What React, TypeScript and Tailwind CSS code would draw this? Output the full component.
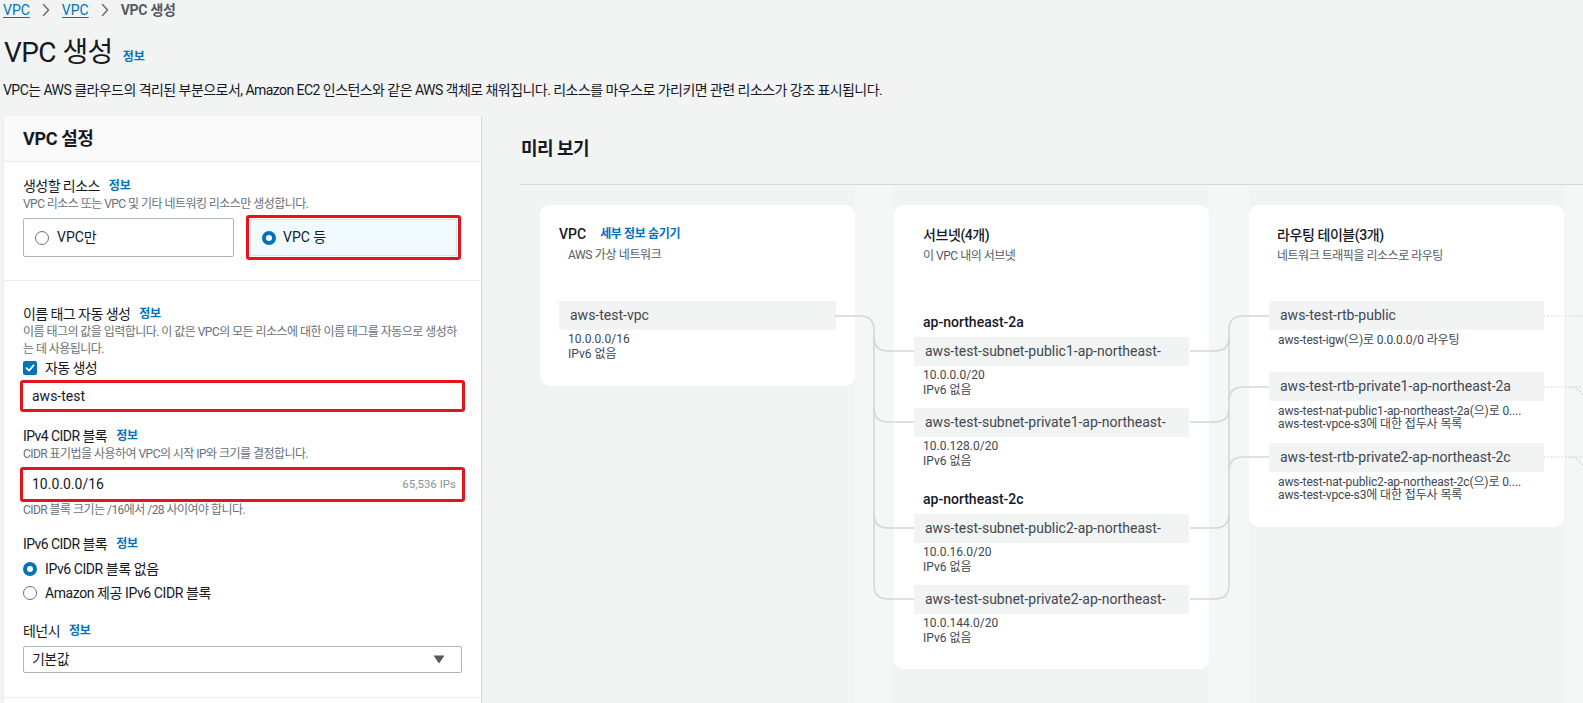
import React from "react";

function Info({ className = "" }: { className?: string }) {
  return <span className={`text-[12px] font-bold text-[#0073bb] tracking-[-0.02em] ${className}`}>정보</span>;
}

function Radio({ checked }: { checked?: boolean }) {
  return checked ? (
    <span className="inline-block w-[14px] h-[14px] rounded-full border-[4px] border-[#0073bb] bg-white shrink-0" />
  ) : (
    <span className="inline-block w-[14px] h-[14px] rounded-full border-[1.5px] border-[#687078] bg-white shrink-0" />
  );
}

function Chevron() {
  return (
    <svg width="8" height="14" viewBox="0 0 8 14" className="shrink-0">
      <path d="M1.5 1.5 L6.5 7 L1.5 12.5" fill="none" stroke="#687078" strokeWidth="1.5" strokeLinecap="round" strokeLinejoin="round" />
    </svg>
  );
}

function Pill({ children }: { children: React.ReactNode }) {
  return (
    <div className="h-[29px] flex items-center bg-[#f2f3f3] pl-[11px] text-[14px] text-[#414750] whitespace-nowrap overflow-hidden">
      {children}
    </div>
  );
}

function Details({ lines, className = "" }: { lines: string[]; className?: string }) {
  return (
    <div className={`pl-[9px] text-[12px] leading-[15px] text-[#414750] ${className}`}>
      {lines.map((l) => (
        <div key={l}>{l}</div>
      ))}
    </div>
  );
}

function RouteDesc({ lines, className = "" }: { lines: string[]; className?: string }) {
  return (
    <div className={`pl-[9px] text-[12px] leading-[13px] text-[#414750] whitespace-nowrap tracking-[-0.01em] ${className}`}>
      {lines.map((l) => (
        <div key={l}>{l}</div>
      ))}
    </div>
  );
}

function Label({ text, className = "" }: { text: string; className?: string }) {
  return (
    <div className={`h-5 flex items-center text-[14px] ${className}`}>
      <span className="tracking-[-0.04em]">{text}</span>
      <Info className="ml-[9px]" />
    </div>
  );
}

function Desc({ children, className = "" }: { children: React.ReactNode; className?: string }) {
  return <div className={`text-[12px] leading-4 text-[#687078] tracking-[-0.045em] whitespace-nowrap ${className}`}>{children}</div>;
}

function LeftPanel() {
  return (
    <div className="ml-[3px] w-[479px] shrink-0 bg-white border-l border-[#eaeded] border-r border-r-[#d5dbdb] flex flex-col">
      <div className="h-[46px] shrink-0 bg-[#fafafa] border-b border-[#eaeded] flex items-center pl-[19px]">
        <span className="text-[18px] font-bold tracking-[-0.02em]">VPC 설정</span>
      </div>

      {/* Section 1 */}
      <div className="px-[19px] pt-[14px] pb-[20px] border-b border-[#eaeded]">
        <Label text="생성할 리소스" />
        <Desc>VPC 리소스 또는 VPC 및 기타 네트워킹 리소스만 생성합니다.</Desc>
        <div className="mt-[3px] grid grid-cols-[211px_215px] gap-x-[12px] items-center h-[45px]">
          <div className="h-[39px] border border-[#aab7b8] rounded-[2px] flex items-center pl-[11px] gap-[8px] text-[14px]">
            <Radio />
            <span>VPC만</span>
          </div>
          <div className="h-[45px] border-[3px] border-[#e3141c] rounded-[3px] p-[1px]">
            <div className="h-full bg-[#f1faff] border border-[#cfe6f4] flex items-center pl-[11px] gap-[7px] text-[14px]">
              <Radio checked />
              <span>VPC 등</span>
            </div>
          </div>
        </div>
      </div>

      {/* Section 2 */}
      <div className="px-[19px] pt-[23px] pb-[24px] border-b border-[#eaeded]">
        <Label text="이름 태그 자동 생성" />
        <div className="text-[12px] leading-[17px] text-[#687078] tracking-[-0.045em] whitespace-nowrap">
          이름 태그의 값을 입력합니다. 이 값은 VPC의 모든 리소스에 대한 이름 태그를 자동으로 생성하
          <br />는 데 사용됩니다.
        </div>
        <div className="h-5 flex items-center gap-[8px] text-[14px]">
          <span className="w-[14px] h-[14px] rounded-[2px] bg-[#0073bb] flex items-center justify-center shrink-0">
            <svg width="10" height="10" viewBox="0 0 10 10">
              <path d="M1.5 5.2 L4 7.6 L8.6 2.4" fill="none" stroke="white" strokeWidth="1.8" strokeLinecap="round" strokeLinejoin="round" />
            </svg>
          </span>
          <span className="tracking-[-0.04em]">자동 생성</span>
        </div>
        <div className="mt-[2px] -mx-[3px] h-[32px] border-[3px] border-[#e3141c] rounded-[3px]">
          <div className="h-full bg-white flex items-center pl-[9px] text-[14px]">aws-test</div>
        </div>

        <Label text="IPv4 CIDR 블록" className="mt-[14px]" />
        <Desc>CIDR 표기법을 사용하여 VPC의 시작 IP와 크기를 결정합니다.</Desc>
        <div className="mt-[5px] -mx-[3px] h-[35px] border-[3px] border-[#e3141c] rounded-[3px]">
          <div className="h-full bg-white flex items-center justify-between pl-[9px] pr-[6px]">
            <span className="text-[14px]">10.0.0.0/16</span>
            <span className="text-[11.5px] text-[#879596]">65,536 IPs</span>
          </div>
        </div>
        <Desc>CIDR 블록 크기는 /16에서 /28 사이여야 합니다.</Desc>

        <Label text="IPv6 CIDR 블록" className="mt-[16px]" />
        <div className="mt-[5px] h-5 flex items-center gap-[8px] text-[14px]">
          <Radio checked />
          <span className="tracking-[-0.03em]">IPv6 CIDR 블록 없음</span>
        </div>
        <div className="mt-[4px] h-5 flex items-center gap-[8px] text-[14px]">
          <Radio />
          <span className="tracking-[-0.03em]">Amazon 제공 IPv6 CIDR 블록</span>
        </div>

        <Label text="테넌시" className="mt-[18px]" />
        <div className="mt-[5px] h-[27px] border border-[#aab7b8] rounded-[2px] flex items-center justify-between pl-[8px] pr-[16px] text-[14px]">
          <span className="tracking-[-0.04em]">기본값</span>
          <svg width="12" height="9" viewBox="0 0 12 9">
            <path d="M0.5 0.5 H11.5 L6 8.5 Z" fill="#545b64" />
          </svg>
        </div>
      </div>
      <div className="flex-1" />
    </div>
  );
}

function Connectors() {
  const stroke = "#d2d8d8";
  const subY = [166, 237, 343, 414];
  const rtY = [131, 202, 272];
  const r = 14;
  return (
    <svg className="absolute left-0 top-0 pointer-events-none overflow-visible" width="1100" height="520">
      <path d={`M315 131 H340 Q354 131 354 ${131 + r} V${414 - r} Q354 414 ${354 + r} 414 H394`} fill="none" stroke={stroke} strokeWidth="1.6" />
      {subY.slice(0, 3).map((y) => (
        <path key={y} d={`M354 ${y - r} Q354 ${y} ${354 + r} ${y} H394`} fill="none" stroke={stroke} strokeWidth="1.6" />
      ))}
      {subY.map((y) => (
        <path key={"s" + y} d={`M670 ${y} H${709 - r} Q709 ${y} 709 ${y - r}`} fill="none" stroke={stroke} strokeWidth="1.6" />
      ))}
      <path d={`M709 ${131 + r} V${414 - r}`} fill="none" stroke={stroke} strokeWidth="1.6" />
      {rtY.map((y) => (
        <path key={"r" + y} d={`M709 ${y + r} Q709 ${y} ${709 + r} ${y} H749`} fill="none" stroke={stroke} strokeWidth="1.6" />
      ))}
      {rtY.map((y) => (
        <path key={"d" + y} d={`M1024 ${y} H1070`} fill="none" stroke="#c9cfcf" strokeWidth="1.2" strokeDasharray="1.5 2" />
      ))}
      <path d="M1050 202 Q1058 202 1064 212 L1080 240" fill="none" stroke="#c9cfcf" strokeWidth="1.2" strokeDasharray="1.5 2" />
      <path d="M1050 272 Q1058 272 1064 282 L1080 310" fill="none" stroke="#c9cfcf" strokeWidth="1.2" strokeDasharray="1.5 2" />
    </svg>
  );
}

function CardHeader({ title, desc, pl = "pl-[29px]" }: { title: string; desc: string; pl?: string }) {
  return (
    <div className={pl}>
      <div className="h-5 flex items-center text-[14px] font-medium tracking-[-0.03em]">{title}</div>
      <div className="mt-[3px] text-[12px] leading-4 text-[#545b64] tracking-[-0.04em]">{desc}</div>
    </div>
  );
}

function Preview() {
  return (
    <div className="flex-1 min-w-0 pl-[38px] flex flex-col">
      <h2 className="mt-[21px] h-6 pl-[1px] text-[18px] leading-6 font-bold whitespace-nowrap tracking-[-0.03em]">미리 보기</h2>
      <div className="mt-[23px] border-t border-[#d5dbdb]" />
      <div className="relative flex-1 flex">
        <div className="w-[20px] shrink-0" />
        <div className="w-[315px] shrink-0 pt-[20px]">
          <div className="bg-white rounded-[10px] px-[19px] pt-[19px] pb-[24px]">
            <div className="h-5 flex items-center text-[14px]">
              <span className="font-medium">VPC</span>
              <span className="ml-[14px] text-[12px] font-bold text-[#0073bb] tracking-[-0.03em]">세부 정보 숨기기</span>
            </div>
            <div className="mt-[3px] pl-[9px] text-[12px] leading-4 text-[#545b64] tracking-[-0.03em]">AWS 가상 네트워크</div>
            <div className="mt-[38px]">
              <Pill>aws-test-vpc</Pill>
            </div>
            <Details className="mt-[2px] leading-[14px]" lines={["10.0.0.0/16", "IPv6 없음"]} />
          </div>
        </div>
        <div className="w-[39px] shrink-0 bg-[#f5f6f6]" />
        <div className="w-[315px] shrink-0 pt-[20px]">
          <div className="bg-white rounded-[10px] pt-[20px] pb-[23px]">
            <CardHeader title="서브넷(4개)" desc="이 VPC 내의 서브넷" />
            <div className="px-[20px]">
              <div className="mt-[48px] pl-[9px] h-5 flex items-center text-[14px] font-medium">ap-northeast-2a</div>
              <div className="mt-[5px]"><Pill>aws-test-subnet-public1-ap-northeast-</Pill></div>
              <Details className="mt-[2px]" lines={["10.0.0.0/20", "IPv6 없음"]} />
              <div className="mt-[10px]"><Pill>aws-test-subnet-private1-ap-northeast-</Pill></div>
              <Details className="mt-[2px]" lines={["10.0.128.0/20", "IPv6 없음"]} />
              <div className="mt-[20px] pl-[9px] h-5 flex items-center text-[14px] font-medium">ap-northeast-2c</div>
              <div className="mt-[5px]"><Pill>aws-test-subnet-public2-ap-northeast-</Pill></div>
              <Details className="mt-[2px]" lines={["10.0.16.0/20", "IPv6 없음"]} />
              <div className="mt-[10px]"><Pill>aws-test-subnet-private2-ap-northeast-</Pill></div>
              <Details className="mt-[2px]" lines={["10.0.144.0/20", "IPv6 없음"]} />
            </div>
          </div>
        </div>
        <div className="w-[40px] shrink-0 bg-[#f5f6f6]" />
        <div className="w-[315px] shrink-0 pt-[20px]">
          <div className="bg-white rounded-[10px] pt-[20px] pb-[25px]">
            <CardHeader title="라우팅 테이블(3개)" desc="네트워크 트래픽을 리소스로 라우팅" pl="pl-[28px]" />
            <div className="px-[20px]">
              <div className="mt-[37px]"><Pill>aws-test-rtb-public</Pill></div>
              <RouteDesc className="mt-[4px]" lines={["aws-test-igw(으)로 0.0.0.0/0 라우팅"]} />
              <div className="mt-[25px]"><Pill>aws-test-rtb-private1-ap-northeast-2a</Pill></div>
              <RouteDesc className="mt-[4px]" lines={["aws-test-nat-public1-ap-northeast-2a(으)로 0....", "aws-test-vpce-s3에 대한 접두사 목록"]} />
              <div className="mt-[12px]"><Pill>aws-test-rtb-private2-ap-northeast-2c</Pill></div>
              <RouteDesc className="mt-[4px]" lines={["aws-test-nat-public2-ap-northeast-2c(으)로 0....", "aws-test-vpce-s3에 대한 접두사 목록"]} />
            </div>
          </div>
        </div>
        <div className="w-[39px] shrink-0 bg-[#f5f6f6]" />
        <Connectors />
      </div>
    </div>
  );
}

export default function App() {
  return (
    <div className="w-[1583px] h-[703px] overflow-hidden bg-[#f2f3f3] text-[#16191f] font-[family-name:Roboto,'Noto_Sans_CJK_KR',sans-serif]">
      <div className="pl-[3px] h-[100px]">
        <nav className="h-5 flex items-center gap-[12px] text-[14px] leading-5">
          <span className="text-[#0073bb] underline underline-offset-2">VPC</span>
          <Chevron />
          <span className="text-[#0073bb] underline underline-offset-2">VPC</span>
          <Chevron />
          <span className="font-bold text-[#545b64] tracking-[-0.02em]">VPC 생성</span>
        </nav>
        <div className="mt-[15px] h-9 flex items-center pl-[1px]">
          <h1 className="text-[28px] leading-9 font-normal tracking-[-0.02em]">VPC 생성</h1>
          <Info className="ml-[10px] mt-[8px]" />
        </div>
        <p className="mt-[9px] text-[14px] leading-5 whitespace-nowrap tracking-[-0.55px]">
          VPC는 AWS 클라우드의 격리된 부분으로서, Amazon EC2 인스턴스와 같은 AWS 객체로 채워집니다. 리소스를 마우스로 가리키면 관련 리소스가 강조 표시됩니다.
        </p>
      </div>
      <div className="mt-[16px] flex h-[587px]">
        <LeftPanel />
        <Preview />
      </div>
    </div>
  );
}
